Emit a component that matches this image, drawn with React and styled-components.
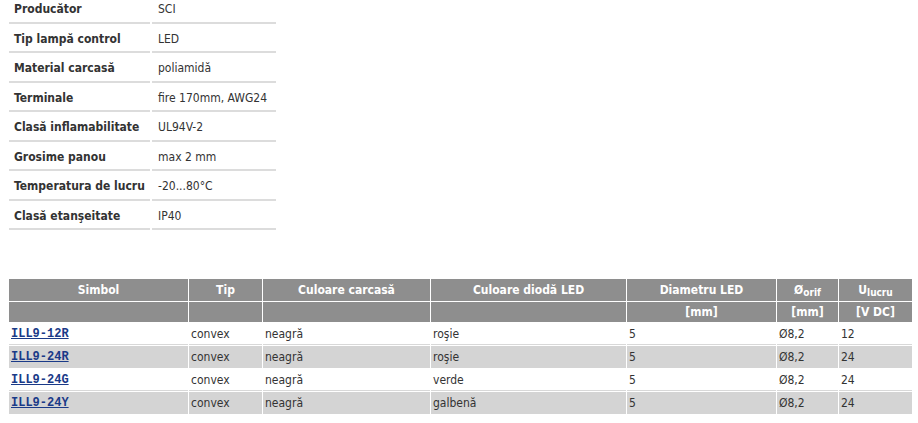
import React from "react";
import styled, { createGlobalStyle } from "styled-components";

const GlobalStyle = createGlobalStyle`
  body {
    margin: 0;
    background: #fff;
    font-family: "DejaVu Sans Condensed", "DejaVu Sans", sans-serif;
    font-size: 12px;
    color: #333;
  }
`;

const Page = styled.div`
  width: 918px;
  height: 423px;
  overflow: hidden;
`;

const SpecTable = styled.table`
  margin-left: 7px;
  border-collapse: separate;
  border-spacing: 2px 0;
`;

const SpecCell = styled.td`
  box-sizing: border-box;
  width: ${(p) => p.$w}px;
  padding: 8px 0 5px ${(p) => p.$pl}px;
  line-height: 15px;
  border-bottom: 2px solid #dcdcdc;
  font-weight: ${(p) => (p.$label ? "bold" : "normal")};
  color: #333;
  white-space: nowrap;
  tr:first-child > & {
    padding-top: 2px;
  }
  tr:nth-child(even) > & {
    padding-bottom: 4px;
  }
`;

const ProductTable = styled.table`
  margin: 48px 0 0 8px;
  border-collapse: separate;
  border-spacing: 1px;
  table-layout: fixed;
  width: 905px;
`;

const HeadCell = styled.th`
  box-sizing: border-box;
  background: #8e8e8e;
  color: #fff;
  font-weight: bold;
  text-align: center;
  height: ${(p) => p.$h}px;
  padding: 0 2px;
  vertical-align: ${(p) => (p.$top ? "top" : "middle")};
  line-height: 16px;
  padding-top: ${(p) => (p.$top ? 2 : 0)}px;
  white-space: nowrap;
  width: ${(p) => (p.$w ? `${p.$w}px` : "auto")};
`;

const Sub = styled.sub`
  font-size: 10px;
  vertical-align: -2px;
  line-height: 0;
`;

const Cell = styled.td`
  box-sizing: border-box;
  height: 22px;
  padding: 0 2px;
  background: ${(p) => (p.$shade ? "#d4d4d4" : "#fff")};
  border-bottom: 1px solid ${(p) => (p.$shade ? "#d4d4d4" : "#d8d8d8")};
  color: #333;
  white-space: nowrap;
  vertical-align: middle;
`;

const ProductLink = styled.a`
  font-family: "Liberation Mono", "DejaVu Sans Mono", monospace;
  font-weight: bold;
  font-size: 12px;
  color: #1a3a88;
  text-decoration: underline;
`;

const specs = [
  ["Producător", "SCI"],
  ["Tip lampă control", "LED"],
  ["Material carcasă", "poliamidă"],
  ["Terminale", "fire 170mm, AWG24"],
  ["Clasă inflamabilitate", "UL94V-2"],
  ["Grosime panou", "max 2 mm"],
  ["Temperatura de lucru", "-20...80°C"],
  ["Clasă etanşeitate", "IP40"],
];

const products = [
  ["ILL9-12R", "convex", "neagră", "roşie", "5", "Ø8,2", "12"],
  ["ILL9-24R", "convex", "neagră", "roşie", "5", "Ø8,2", "24"],
  ["ILL9-24G", "convex", "neagră", "verde", "5", "Ø8,2", "24"],
  ["ILL9-24Y", "convex", "neagră", "galbenă", "5", "Ø8,2", "24"],
];

export default function App() {
  return (
    <Page>
      <GlobalStyle />
      <SpecTable>
        <tbody>
          {specs.map(([label, value]) => (
            <tr key={label}>
              <SpecCell $label $w={141} $pl={5}>
                {label}
              </SpecCell>
              <SpecCell $w={124} $pl={6}>
                {value}
              </SpecCell>
            </tr>
          ))}
        </tbody>
      </SpecTable>

      <ProductTable>
        <thead>
          <tr>
            <HeadCell $h={22} $w={179}>Simbol</HeadCell>
            <HeadCell $h={22} $w={73}>Tip</HeadCell>
            <HeadCell $h={22} $w={167}>Culoare carcasă</HeadCell>
            <HeadCell $h={22} $w={195}>Culoare diodă LED</HeadCell>
            <HeadCell $h={22} $w={149}>Diametru LED</HeadCell>
            <HeadCell $h={22} $w={61}>
              Ø<Sub>orif</Sub>
            </HeadCell>
            <HeadCell $h={22}>
              U<Sub>lucru</Sub>
            </HeadCell>
          </tr>
          <tr>
            <HeadCell $h={20} $top />
            <HeadCell $h={20} $top />
            <HeadCell $h={20} $top />
            <HeadCell $h={20} $top />
            <HeadCell $h={20} $top>[mm]</HeadCell>
            <HeadCell $h={20} $top>[mm]</HeadCell>
            <HeadCell $h={20} $top>[V DC]</HeadCell>
          </tr>
        </thead>
        <tbody>
          {products.map((row, i) => (
            <tr key={row[0]}>
              {row.map((value, j) => (
                <Cell key={j} $shade={i % 2 === 1}>
                  {j === 0 ? <ProductLink href="#">{value}</ProductLink> : value}
                </Cell>
              ))}
            </tr>
          ))}
        </tbody>
      </ProductTable>
    </Page>
  );
}
